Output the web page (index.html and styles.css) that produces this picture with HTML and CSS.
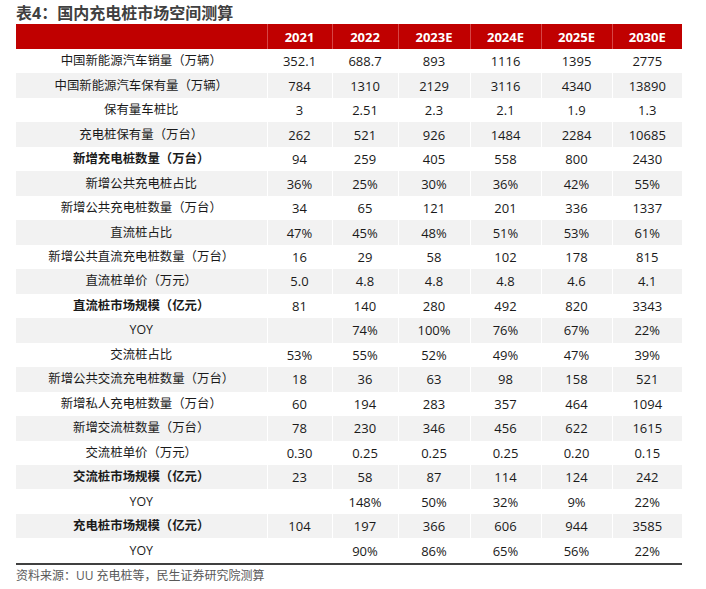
FILE: index.html
```html
<!DOCTYPE html>
<html lang="zh-CN">
<head>
<meta charset="utf-8">
<title>表4：国内充电桩市场空间测算</title>
<link rel="stylesheet" href="styles.css">
</head>
<body>
<div class="page">
  <h1 class="title">表4：国内充电桩市场空间测算</h1>
  <table class="data">
    <colgroup>
      <col class="c-label"><col class="c-2021"><col class="c-2022"><col class="c-2023"><col class="c-2024"><col class="c-2025"><col class="c-2030">
    </colgroup>
    <thead>
      <tr><th></th><th>2021</th><th>2022</th><th>2023E</th><th>2024E</th><th>2025E</th><th>2030E</th></tr>
    </thead>
    <tbody>
      <tr><td>中国新能源汽车销量（万辆）</td><td>352.1</td><td>688.7</td><td>893</td><td>1116</td><td>1395</td><td>2775</td></tr>
      <tr><td>中国新能源汽车保有量（万辆）</td><td>784</td><td>1310</td><td>2129</td><td>3116</td><td>4340</td><td>13890</td></tr>
      <tr><td>保有量车桩比</td><td>3</td><td>2.51</td><td>2.3</td><td>2.1</td><td>1.9</td><td>1.3</td></tr>
      <tr><td>充电桩保有量（万台）</td><td>262</td><td>521</td><td>926</td><td>1484</td><td>2284</td><td>10685</td></tr>
      <tr><td class="b">新增充电桩数量（万台）</td><td>94</td><td>259</td><td>405</td><td>558</td><td>800</td><td>2430</td></tr>
      <tr><td>新增公共充电桩占比</td><td>36%</td><td>25%</td><td>30%</td><td>36%</td><td>42%</td><td>55%</td></tr>
      <tr><td>新增公共充电桩数量（万台）</td><td>34</td><td>65</td><td>121</td><td>201</td><td>336</td><td>1337</td></tr>
      <tr><td>直流桩占比</td><td>47%</td><td>45%</td><td>48%</td><td>51%</td><td>53%</td><td>61%</td></tr>
      <tr><td>新增公共直流充电桩数量（万台）</td><td>16</td><td>29</td><td>58</td><td>102</td><td>178</td><td>815</td></tr>
      <tr><td>直流桩单价（万元）</td><td>5.0</td><td>4.8</td><td>4.8</td><td>4.8</td><td>4.6</td><td>4.1</td></tr>
      <tr><td class="b">直流桩市场规模（亿元）</td><td>81</td><td>140</td><td>280</td><td>492</td><td>820</td><td>3343</td></tr>
      <tr><td>YOY</td><td></td><td>74%</td><td>100%</td><td>76%</td><td>67%</td><td>22%</td></tr>
      <tr><td>交流桩占比</td><td>53%</td><td>55%</td><td>52%</td><td>49%</td><td>47%</td><td>39%</td></tr>
      <tr><td>新增公共交流充电桩数量（万台）</td><td>18</td><td>36</td><td>63</td><td>98</td><td>158</td><td>521</td></tr>
      <tr><td>新增私人充电桩数量（万台）</td><td>60</td><td>194</td><td>283</td><td>357</td><td>464</td><td>1094</td></tr>
      <tr><td>新增交流桩数量（万台）</td><td>78</td><td>230</td><td>346</td><td>456</td><td>622</td><td>1615</td></tr>
      <tr><td>交流桩单价（万元）</td><td>0.30</td><td>0.25</td><td>0.25</td><td>0.25</td><td>0.20</td><td>0.15</td></tr>
      <tr><td class="b">交流桩市场规模（亿元）</td><td>23</td><td>58</td><td>87</td><td>114</td><td>124</td><td>242</td></tr>
      <tr><td>YOY</td><td></td><td>148%</td><td>50%</td><td>32%</td><td>9%</td><td>22%</td></tr>
      <tr><td class="b">充电桩市场规模（亿元）</td><td>104</td><td>197</td><td>366</td><td>606</td><td>944</td><td>3585</td></tr>
      <tr><td>YOY</td><td></td><td>90%</td><td>86%</td><td>65%</td><td>56%</td><td>22%</td></tr>
    </tbody>
  </table>
  <p class="source">资料来源：UU 充电桩等，民生证券研究院测算</p>
</div>
</body>
</html>
```
FILE: styles.css
```css
html, body {
  margin: 0;
  padding: 0;
  background: #ffffff;
}
body {
  font-family: "Open Sans", "Noto Sans CJK SC", sans-serif;
  color: #1a1a1a;
}
.page {
  padding: 3px 0 0 16px;
  width: 666px;
}
.title {
  margin: 0;
  font-size: 16px;
  line-height: 20px;
  font-weight: 700;
  color: #404040;
  height: 21px;
}
.data {
  border-collapse: collapse;
  table-layout: fixed;
  width: 666px;
  font-size: 13px;
}
.c-label { width: 251px; }
.c-2021 { width: 65px; }
.c-2022 { width: 66px; }
.c-2023 { width: 72px; }
.c-2024 { width: 71px; }
.c-2025 { width: 71px; }
.c-2030 { width: 70px; }
.data th {
  background: #c00000;
  color: #ffffff;
  font-weight: 700;
  font-size: 13px;
  height: 25px;
  padding: 0;
  text-align: center;
  border-left: 1px solid #d64545;
}
.data th:first-child { border-left: none; }
.data td {
  height: 24.48px;
  padding: 0;
  text-align: center;
  line-height: 16px;
  border-left: 1px solid #ffffff;
}
.data td:first-child {
  border-left: none;
  font-size: 12.4px;
}
.data tbody tr:nth-child(even) td { background: #f2f2f2; }
.data tbody tr:last-child td { border-bottom: 2px solid #404040; }
.data td.b { font-weight: 700; }
.source {
  margin: 2px 0 0 0;
  font-size: 12px;
  line-height: 18px;
  color: #595959;
}
```
